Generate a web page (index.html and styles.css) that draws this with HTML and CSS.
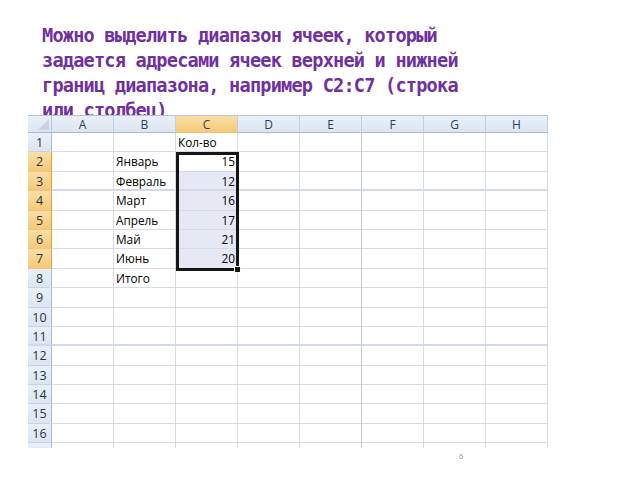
FILE: index.html
```html
<!DOCTYPE html>
<html lang="ru">
<head>
    <meta charset="UTF-8">
    <title>Диапазон ячеек</title>
    <link rel="stylesheet" href="styles.css">
</head>
<body>
    <div class="slide">
        <p class="title">Можно выделить диапазон ячеек, который задается адресами ячеек верхней и нижней границ диапазона, например C2:C7 (строка или столбец)</p>

        <div class="sheet">
            <div class="grid">
                <div class="corner"></div>
                <div class="ch">A</div><div class="ch">B</div><div class="ch on">C</div><div class="ch">D</div>
                <div class="ch split">E</div><div class="ch">F</div><div class="ch">G</div><div class="ch">H</div>

                <div class="rh">1</div>
                <div></div><div></div><div>Кол-во</div><div></div><div class="split"></div><div></div><div></div><div></div>

                <div class="rh on">2</div>
                <div></div><div>Январь</div><div class="num">15</div><div></div><div class="split"></div><div></div><div></div><div></div>

                <div class="rh on thick">3</div>
                <div class="thick"></div><div class="thick">Февраль</div><div class="num sel thick">12</div><div class="thick"></div><div class="split thick"></div><div class="thick"></div><div class="thick"></div><div class="thick"></div>

                <div class="rh on">4</div>
                <div></div><div>Март</div><div class="num sel">16</div><div></div><div class="split"></div><div></div><div></div><div></div>

                <div class="rh on">5</div>
                <div></div><div>Апрель</div><div class="num sel">17</div><div></div><div class="split"></div><div></div><div></div><div></div>

                <div class="rh on">6</div>
                <div></div><div>Май</div><div class="num sel">21</div><div></div><div class="split"></div><div></div><div></div><div></div>

                <div class="rh on">7</div>
                <div></div><div>Июнь</div><div class="num sel">20</div><div></div><div class="split"></div><div></div><div></div><div></div>

                <div class="rh">8</div>
                <div></div><div>Итого</div><div></div><div></div><div class="split"></div><div></div><div></div><div></div>

                <div class="rh">9</div>
                <div></div><div></div><div></div><div></div><div class="split"></div><div></div><div></div><div></div>

                <div class="rh">10</div>
                <div></div><div></div><div></div><div></div><div class="split"></div><div></div><div></div><div></div>

                <div class="rh thick">11</div>
                <div class="thick"></div><div class="thick"></div><div class="thick"></div><div class="thick"></div><div class="split thick"></div><div class="thick"></div><div class="thick"></div><div class="thick"></div>

                <div class="rh">12</div>
                <div></div><div></div><div></div><div></div><div class="split"></div><div></div><div></div><div></div>

                <div class="rh">13</div>
                <div></div><div></div><div></div><div></div><div class="split"></div><div></div><div></div><div></div>

                <div class="rh">14</div>
                <div></div><div></div><div></div><div></div><div class="split"></div><div></div><div></div><div></div>

                <div class="rh">15</div>
                <div></div><div></div><div></div><div></div><div class="split"></div><div></div><div></div><div></div>

                <div class="rh">16</div>
                <div></div><div></div><div></div><div></div><div class="split"></div><div></div><div></div><div></div>

                <div class="rh"></div>
                <div></div><div></div><div></div><div></div><div class="split"></div><div></div><div></div><div></div>
            </div>

            <!-- рамка выделенного диапазона C2:C7 -->
            <div class="range"><span class="handle"></span></div>
        </div>

        <div class="page-num">6</div>
    </div>
</body>
</html>
```

FILE: styles.css
```css
body {
    margin: 0;
    background: #fff;
}
.slide {
    width: 640px;
    height: 480px;
    padding-top: 23px;
    box-sizing: border-box;
    position: relative;
}
.title {
    margin: 0 0 0 42px;
    width: 440px;
    height: 92px;
    font-family: "DejaVu Sans Mono", monospace;
    font-weight: bold;
    font-size: 18.6px;
    letter-spacing: -0.8px;
    line-height: 25px;
    color: #7030a0;
}

/* лист Excel */
.sheet {
    position: relative;
    z-index: 1;
    margin-left: 28px;
    width: 520px;
    height: 333px;
    overflow: hidden;
    background: #fff;
}
.grid {
    display: grid;
    grid-template-columns: 24px repeat(8, 62px);
    grid-template-rows: 18px repeat(17, 19.4px);
    font-family: "Open Sans", "Liberation Sans", sans-serif;
    font-size: 11.8px;
    color: #000;
}
.grid > div {
    border-right: 1px solid #d5dbe7;
    border-bottom: 1px solid #d5dbe7;
    box-sizing: border-box;
    padding: 0 2px;
    line-height: 19px;
    white-space: nowrap;
}
.grid > div.split {
    border-right-color: #c3cbdc;
}
.grid > div.thick {
    border-bottom: 2px solid #d3d9e6;
}
.num {
    text-align: right;
}
.sel {
    background: #e6e9f3;
}

.corner,
.ch,
.rh {
    background: linear-gradient(#eaf0f8, #dce5f1);
    color: #2b3f5c;
    text-align: center;
    font-size: 12px;
}
.grid > .corner {
    position: relative;
    border-top: 1px solid #b4c5d9;
    border-right: 1px solid #b4c5d9;
    border-bottom: 1px solid #a9bcd2;
}
.corner::after {
    content: "";
    position: absolute;
    right: 2px;
    bottom: 2px;
    border-left: 11px solid transparent;
    border-bottom: 11px solid #c6d3e4;
}
.grid > .ch {
    border-top: 1px solid #b4c5d9;
    border-right: 1px solid #c1cedf;
    border-bottom: 1px solid #a9bcd2;
    line-height: 17px;
}
.grid > .rh {
    border-right: 1px solid #a9bcd2;
    border-bottom: 1px solid #c8d4e3;
    padding: 0;
    font-size: 12.5px;
    color: #27344a;
}
.grid > .ch.on,
.grid > .rh.on {
    background: linear-gradient(#fbdfa6, #f6c978);
    border-bottom-color: #f0bf6d;
}
.grid > .rh.on {
    border-right: 1px solid #f29b3c;
    border-bottom-color: #efc383;
}

.range {
    position: absolute;
    left: 148px;
    top: 37px;
    width: 63px;
    height: 119px;
    border: 3px solid #151515;
    box-sizing: border-box;
}
.handle {
    position: absolute;
    right: -5px;
    bottom: -5px;
    width: 5px;
    height: 5px;
    background: #151515;
    border: 1px solid #fff;
}

.page-num {
    position: absolute;
    left: 459px;
    top: 452px;
    font-family: "Liberation Sans", sans-serif;
    font-size: 8px;
    color: #9a9a9a;
}
```
